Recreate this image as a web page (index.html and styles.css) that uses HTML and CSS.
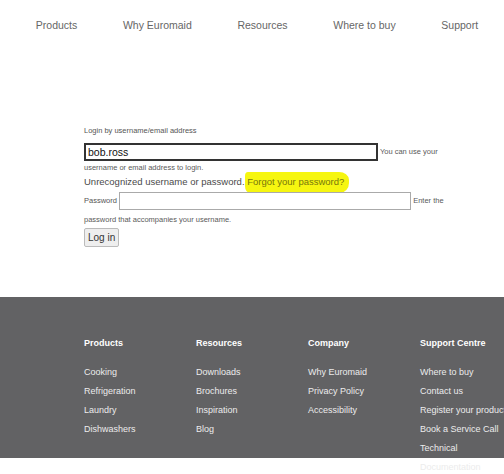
FILE: index.html
```html
<!DOCTYPE html>
<html lang="en">
<head>
<meta charset="utf-8">
<title>Log in | Euromaid</title>
<link rel="stylesheet" href="styles.css">
</head>
<body>
<header class="site-header">
  <nav class="main-nav">
    <a href="#">Products</a>
    <a href="#">Why Euromaid</a>
    <a href="#">Resources</a>
    <a href="#">Where to buy</a>
    <a href="#">Support</a>
  </nav>
</header>

<main class="main">
  <form class="login-form">
    <div class="form-item">
      <label class="form-label">Login by username/email address</label>
      <div class="field-line">
        <input class="text-input username" type="text" value="bob.ross"> <span class="description">You can use your username or email address to login.</span>
      </div>
    </div>
    <div class="error-line">Unrecognized username or password. <a class="forgot" href="#">Forgot your password?</a></div>
    <div class="form-item">
      <div class="field-line tall">
        <label class="form-label inline">Password</label> <input class="text-input password" type="password"> <span class="description">Enter the password that accompanies your username.</span>
      </div>
    </div>
    <div class="actions">
      <button class="submit" type="button">Log in</button>
    </div>
  </form>
</main>

<footer class="site-footer">
  <div class="footer-grid">
    <div class="footer-col">
      <h3>Products</h3>
      <ul>
        <li><a href="#">Cooking</a></li>
        <li><a href="#">Refrigeration</a></li>
        <li><a href="#">Laundry</a></li>
        <li><a href="#">Dishwashers</a></li>
      </ul>
    </div>
    <div class="footer-col">
      <h3>Resources</h3>
      <ul>
        <li><a href="#">Downloads</a></li>
        <li><a href="#">Brochures</a></li>
        <li><a href="#">Inspiration</a></li>
        <li><a href="#">Blog</a></li>
      </ul>
    </div>
    <div class="footer-col">
      <h3>Company</h3>
      <ul>
        <li><a href="#">Why Euromaid</a></li>
        <li><a href="#">Privacy Policy</a></li>
        <li><a href="#">Accessibility</a></li>
      </ul>
    </div>
    <div class="footer-col">
      <h3>Support Centre</h3>
      <ul>
        <li><a href="#">Where to buy</a></li>
        <li><a href="#">Contact us</a></li>
        <li><a href="#" class="nowrap">Register your product</a></li>
        <li><a href="#" class="nowrap">Book a Service Call</a></li>
        <li><a href="#">Technical Documentation</a></li>
      </ul>
    </div>
  </div>
</footer>
</body>
</html>
```

FILE: styles.css
```css
html, body {
  margin: 0;
  padding: 0;
  overflow: hidden;
  background: #fff;
}
body {
  font-family: "Liberation Sans", Arial, sans-serif;
  color: #555;
  width: 504px;
  height: 474px;
}
a { text-decoration: none; color: inherit; }

.site-header {
  height: 50px;
  display: flex;
  align-items: center;
}
.main-nav {
  flex: 1;
  display: flex;
  justify-content: space-around;
  padding: 0 3px 0 13px;
  font-size: 10.5px;
  color: #666;
}

.main {
  padding: 75px 0 0 84px;
  height: 172px;
}
.login-form {
  width: 378px;
}
.form-label {
  display: block;
  font-size: 7.5px;
  color: #555;
  line-height: 12px;
  margin-bottom: 6px;
}
.form-label.inline {
  display: inline;
  margin: 0;
}
.field-line {
  font-size: 7.5px;
  line-height: 13px;
  color: #5a5a5a;
}
.field-line.tall {
  line-height: 19px;
}
.text-input {
  vertical-align: middle;
  box-sizing: border-box;
  font-family: inherit;
  margin: 0;
  background: #fff;
}
.username {
  width: 294px;
  height: 18px;
  border: 2px solid #333;
  font-size: 10.5px;
  color: #111;
  padding: 0 2px;
}
.password {
  width: 292px;
  height: 18px;
  border: 1px solid #aaa;
}
.error-line {
  font-size: 9.5px;
  color: #4a4a4a;
  line-height: 14px;
  margin: 1px 0 2px;
}
.forgot {
  color: #77770e;
  background: #f6f610;
  padding: 4px 5px 6px 2px;
  margin-left: -2px;
  border-radius: 3px 10px 9px 5px / 4px 8px 10px 7px;
}
.actions {
  margin-top: -2px;
}
.submit {
  font-family: inherit;
  font-size: 10px;
  color: #333;
  background: #eee;
  border: 1px solid #bbb;
  border-radius: 2px;
  padding: 3px 3px;
  height: 19px;
  line-height: 11px;
}

.site-footer {
  background: #626264;
  height: 161px;
  box-sizing: border-box;
  padding: 40px 0 0 84px;
}
.footer-grid {
  display: grid;
  grid-template-columns: repeat(4, 112px);
}
.footer-col h3 {
  margin: 0 0 14px;
  font-size: 9px;
  font-weight: bold;
  color: #fff;
  line-height: 12px;
}
.footer-col ul {
  list-style: none;
  margin: 0;
  padding: 0;
}
.footer-col li {
  font-size: 9px;
  line-height: 19px;
  color: #ececec;
  width: 80px;
}
.nowrap { white-space: nowrap; }
```
